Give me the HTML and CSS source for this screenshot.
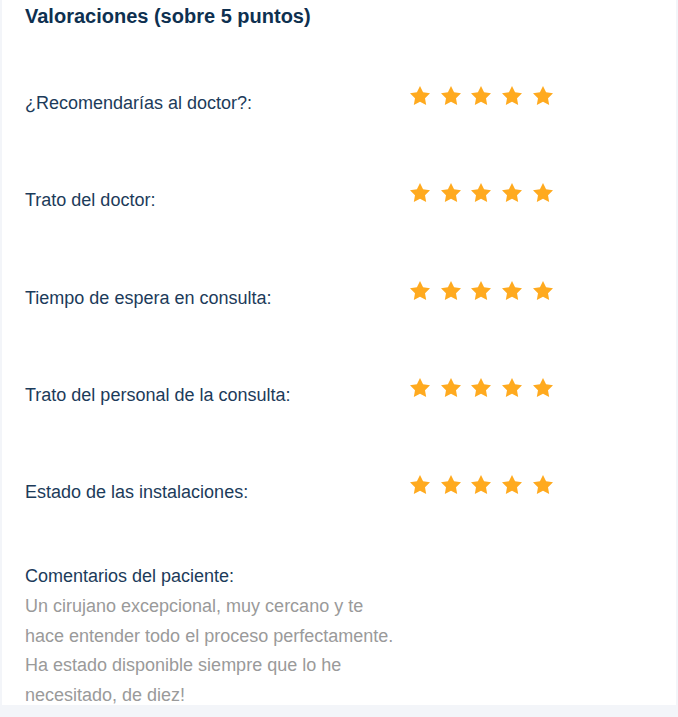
FILE: index.html
```html
<!DOCTYPE html>
<html lang="es">
<head>
<meta charset="utf-8">
<title>Valoraciones</title>
<link rel="stylesheet" href="styles.css">
</head>
<body>
<section class="card">
  <h2 class="title">Valoraciones (sobre 5 puntos)</h2>
  <div class="ratings">
    <div class="row">
      <span class="label">¿Recomendarías al doctor?:</span>
      <span class="stars">
        <svg viewBox="0 0 24 24"><path d="M12 2l3.09 6.26L22 9.27l-5 4.87 1.18 6.88L12 17.77l-6.18 3.25L7 14.14 2 9.27l6.91-1.01L12 2z"/></svg>
        <svg viewBox="0 0 24 24"><path d="M12 2l3.09 6.26L22 9.27l-5 4.87 1.18 6.88L12 17.77l-6.18 3.25L7 14.14 2 9.27l6.91-1.01L12 2z"/></svg>
        <svg viewBox="0 0 24 24"><path d="M12 2l3.09 6.26L22 9.27l-5 4.87 1.18 6.88L12 17.77l-6.18 3.25L7 14.14 2 9.27l6.91-1.01L12 2z"/></svg>
        <svg viewBox="0 0 24 24"><path d="M12 2l3.09 6.26L22 9.27l-5 4.87 1.18 6.88L12 17.77l-6.18 3.25L7 14.14 2 9.27l6.91-1.01L12 2z"/></svg>
        <svg viewBox="0 0 24 24"><path d="M12 2l3.09 6.26L22 9.27l-5 4.87 1.18 6.88L12 17.77l-6.18 3.25L7 14.14 2 9.27l6.91-1.01L12 2z"/></svg>
      </span>
    </div>
    <div class="row">
      <span class="label">Trato del doctor:</span>
      <span class="stars">
        <svg viewBox="0 0 24 24"><path d="M12 2l3.09 6.26L22 9.27l-5 4.87 1.18 6.88L12 17.77l-6.18 3.25L7 14.14 2 9.27l6.91-1.01L12 2z"/></svg>
        <svg viewBox="0 0 24 24"><path d="M12 2l3.09 6.26L22 9.27l-5 4.87 1.18 6.88L12 17.77l-6.18 3.25L7 14.14 2 9.27l6.91-1.01L12 2z"/></svg>
        <svg viewBox="0 0 24 24"><path d="M12 2l3.09 6.26L22 9.27l-5 4.87 1.18 6.88L12 17.77l-6.18 3.25L7 14.14 2 9.27l6.91-1.01L12 2z"/></svg>
        <svg viewBox="0 0 24 24"><path d="M12 2l3.09 6.26L22 9.27l-5 4.87 1.18 6.88L12 17.77l-6.18 3.25L7 14.14 2 9.27l6.91-1.01L12 2z"/></svg>
        <svg viewBox="0 0 24 24"><path d="M12 2l3.09 6.26L22 9.27l-5 4.87 1.18 6.88L12 17.77l-6.18 3.25L7 14.14 2 9.27l6.91-1.01L12 2z"/></svg>
      </span>
    </div>
    <div class="row">
      <span class="label">Tiempo de espera en consulta:</span>
      <span class="stars">
        <svg viewBox="0 0 24 24"><path d="M12 2l3.09 6.26L22 9.27l-5 4.87 1.18 6.88L12 17.77l-6.18 3.25L7 14.14 2 9.27l6.91-1.01L12 2z"/></svg>
        <svg viewBox="0 0 24 24"><path d="M12 2l3.09 6.26L22 9.27l-5 4.87 1.18 6.88L12 17.77l-6.18 3.25L7 14.14 2 9.27l6.91-1.01L12 2z"/></svg>
        <svg viewBox="0 0 24 24"><path d="M12 2l3.09 6.26L22 9.27l-5 4.87 1.18 6.88L12 17.77l-6.18 3.25L7 14.14 2 9.27l6.91-1.01L12 2z"/></svg>
        <svg viewBox="0 0 24 24"><path d="M12 2l3.09 6.26L22 9.27l-5 4.87 1.18 6.88L12 17.77l-6.18 3.25L7 14.14 2 9.27l6.91-1.01L12 2z"/></svg>
        <svg viewBox="0 0 24 24"><path d="M12 2l3.09 6.26L22 9.27l-5 4.87 1.18 6.88L12 17.77l-6.18 3.25L7 14.14 2 9.27l6.91-1.01L12 2z"/></svg>
      </span>
    </div>
    <div class="row">
      <span class="label">Trato del personal de la consulta:</span>
      <span class="stars">
        <svg viewBox="0 0 24 24"><path d="M12 2l3.09 6.26L22 9.27l-5 4.87 1.18 6.88L12 17.77l-6.18 3.25L7 14.14 2 9.27l6.91-1.01L12 2z"/></svg>
        <svg viewBox="0 0 24 24"><path d="M12 2l3.09 6.26L22 9.27l-5 4.87 1.18 6.88L12 17.77l-6.18 3.25L7 14.14 2 9.27l6.91-1.01L12 2z"/></svg>
        <svg viewBox="0 0 24 24"><path d="M12 2l3.09 6.26L22 9.27l-5 4.87 1.18 6.88L12 17.77l-6.18 3.25L7 14.14 2 9.27l6.91-1.01L12 2z"/></svg>
        <svg viewBox="0 0 24 24"><path d="M12 2l3.09 6.26L22 9.27l-5 4.87 1.18 6.88L12 17.77l-6.18 3.25L7 14.14 2 9.27l6.91-1.01L12 2z"/></svg>
        <svg viewBox="0 0 24 24"><path d="M12 2l3.09 6.26L22 9.27l-5 4.87 1.18 6.88L12 17.77l-6.18 3.25L7 14.14 2 9.27l6.91-1.01L12 2z"/></svg>
      </span>
    </div>
    <div class="row">
      <span class="label">Estado de las instalaciones:</span>
      <span class="stars">
        <svg viewBox="0 0 24 24"><path d="M12 2l3.09 6.26L22 9.27l-5 4.87 1.18 6.88L12 17.77l-6.18 3.25L7 14.14 2 9.27l6.91-1.01L12 2z"/></svg>
        <svg viewBox="0 0 24 24"><path d="M12 2l3.09 6.26L22 9.27l-5 4.87 1.18 6.88L12 17.77l-6.18 3.25L7 14.14 2 9.27l6.91-1.01L12 2z"/></svg>
        <svg viewBox="0 0 24 24"><path d="M12 2l3.09 6.26L22 9.27l-5 4.87 1.18 6.88L12 17.77l-6.18 3.25L7 14.14 2 9.27l6.91-1.01L12 2z"/></svg>
        <svg viewBox="0 0 24 24"><path d="M12 2l3.09 6.26L22 9.27l-5 4.87 1.18 6.88L12 17.77l-6.18 3.25L7 14.14 2 9.27l6.91-1.01L12 2z"/></svg>
        <svg viewBox="0 0 24 24"><path d="M12 2l3.09 6.26L22 9.27l-5 4.87 1.18 6.88L12 17.77l-6.18 3.25L7 14.14 2 9.27l6.91-1.01L12 2z"/></svg>
      </span>
    </div>
  </div>
  <div class="comments">
    <div class="comments-title">Comentarios del paciente:</div>
    <p class="comments-text">Un cirujano excepcional, muy cercano y te hace entender todo el proceso perfectamente. Ha estado disponible siempre que lo he necesitado, de diez!</p>
  </div>
</section>
</body>
</html>
```

FILE: styles.css
```css
html, body {
  margin: 0;
  padding: 0;
  background: #f3f5f9;
}

body {
  font-family: "Liberation Sans", Arial, sans-serif;
  height: 717px;
  overflow: hidden;
}

.card {
  background: #ffffff;
  margin: 0 2px;
  height: 705px;
  overflow: hidden;
  padding: 4px 0 0 23px;
  box-sizing: border-box;
}

.title {
  margin: 0;
  font-size: 20px;
  line-height: 24px;
  font-weight: bold;
  color: #0e3050;
}

.ratings {
  display: flex;
  flex-direction: column;
  gap: 73.3px;
  margin-top: 56px;
}

.row {
  display: flex;
  align-items: flex-start;
  height: 24px;
}

.label {
  width: 383px;
  padding-top: 7px;
  font-size: 18px;
  line-height: 24px;
  color: #1c3b5a;
  white-space: nowrap;
}

.stars {
  display: flex;
  gap: 6.7px;
}

.stars svg {
  width: 24px;
  height: 24px;
  fill: #ffaa1f;
}

.comments {
  margin-top: 65px;
  font-size: 18px;
  line-height: 29.7px;
}

.comments-title {
  color: #1c3b5a;
}

.comments-text {
  margin: 0;
  width: 372px;
  color: #9a9a9a;
}
```
